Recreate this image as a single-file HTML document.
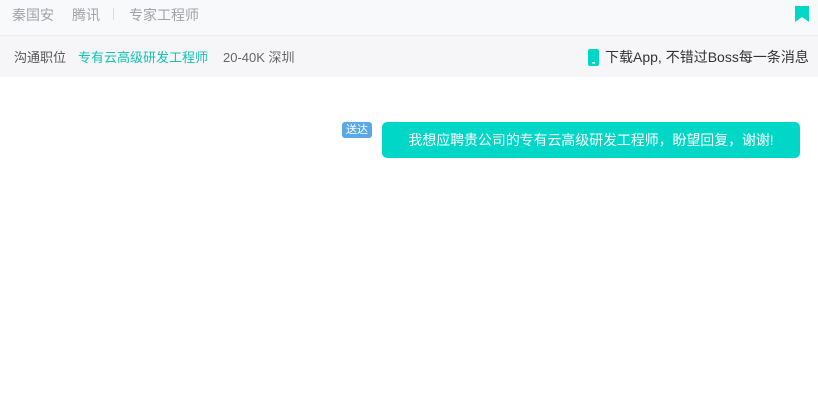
<!DOCTYPE html>
<html><head><meta charset="utf-8"><style>
body{margin:0;width:818px;height:410px;background:#fff;font-family:"Liberation Sans","Noto Sans CJK SC",sans-serif;position:relative;overflow:hidden}
.top{position:absolute;left:0;top:0;width:818px;height:35px;background:#f8f9fb;border-bottom:1px solid #ececec}
.top span{position:absolute;top:5px;font-size:14px;color:#9fa3a8}
.sub{position:absolute;left:0;top:36px;width:818px;height:41px;background:#f6f6f8}
.sub span{position:absolute;top:11px;font-size:13px;color:#555}
.bubble{position:absolute;left:382px;top:122px;width:418px;height:36px;background:#00d7c6;border-radius:5px;color:#fff;font-size:14px;line-height:36px;text-align:center;letter-spacing:-0.1px}
.tag{position:absolute;left:342px;top:122px;width:30px;height:16px;background:#5aa9e6;border-radius:3px;color:#fff;font-size:11px;line-height:16px;text-align:center}
</style></head><body>
<div class="top">
<span style="left:12px">秦国安</span><span style="left:72px">腾讯</span>
<span style="left:113px;top:8px;width:1px;height:12px;background:#ddd"></span>
<span style="left:129px">专家工程师</span>
<svg style="position:absolute;left:795px;top:6px" width="14" height="16"><path d="M0 0H14V16L7 11L0 16Z" fill="#00d7c6"/></svg>
</div>
<div class="sub">
<span style="left:14px">沟通职位</span>
<span style="left:78px;color:#14c1b3">专有云高级研发工程师</span>
<span style="left:223px;color:#666">20-40K 深圳</span>
<svg style="position:absolute;left:588px;top:13px" width="11" height="17"><rect width="11" height="17" rx="2" fill="#00d7c6"/><rect x="4" y="13" width="3" height="1.5" fill="#fff"/></svg>
<span style="left:605px;font-size:14px;top:11px;color:#333">下载App, 不错过Boss每一条消息</span>
</div>
<div class="tag">送达</div>
<div class="bubble">我想应聘贵公司的专有云高级研发工程师，盼望回复，谢谢!</div>
</body></html>
